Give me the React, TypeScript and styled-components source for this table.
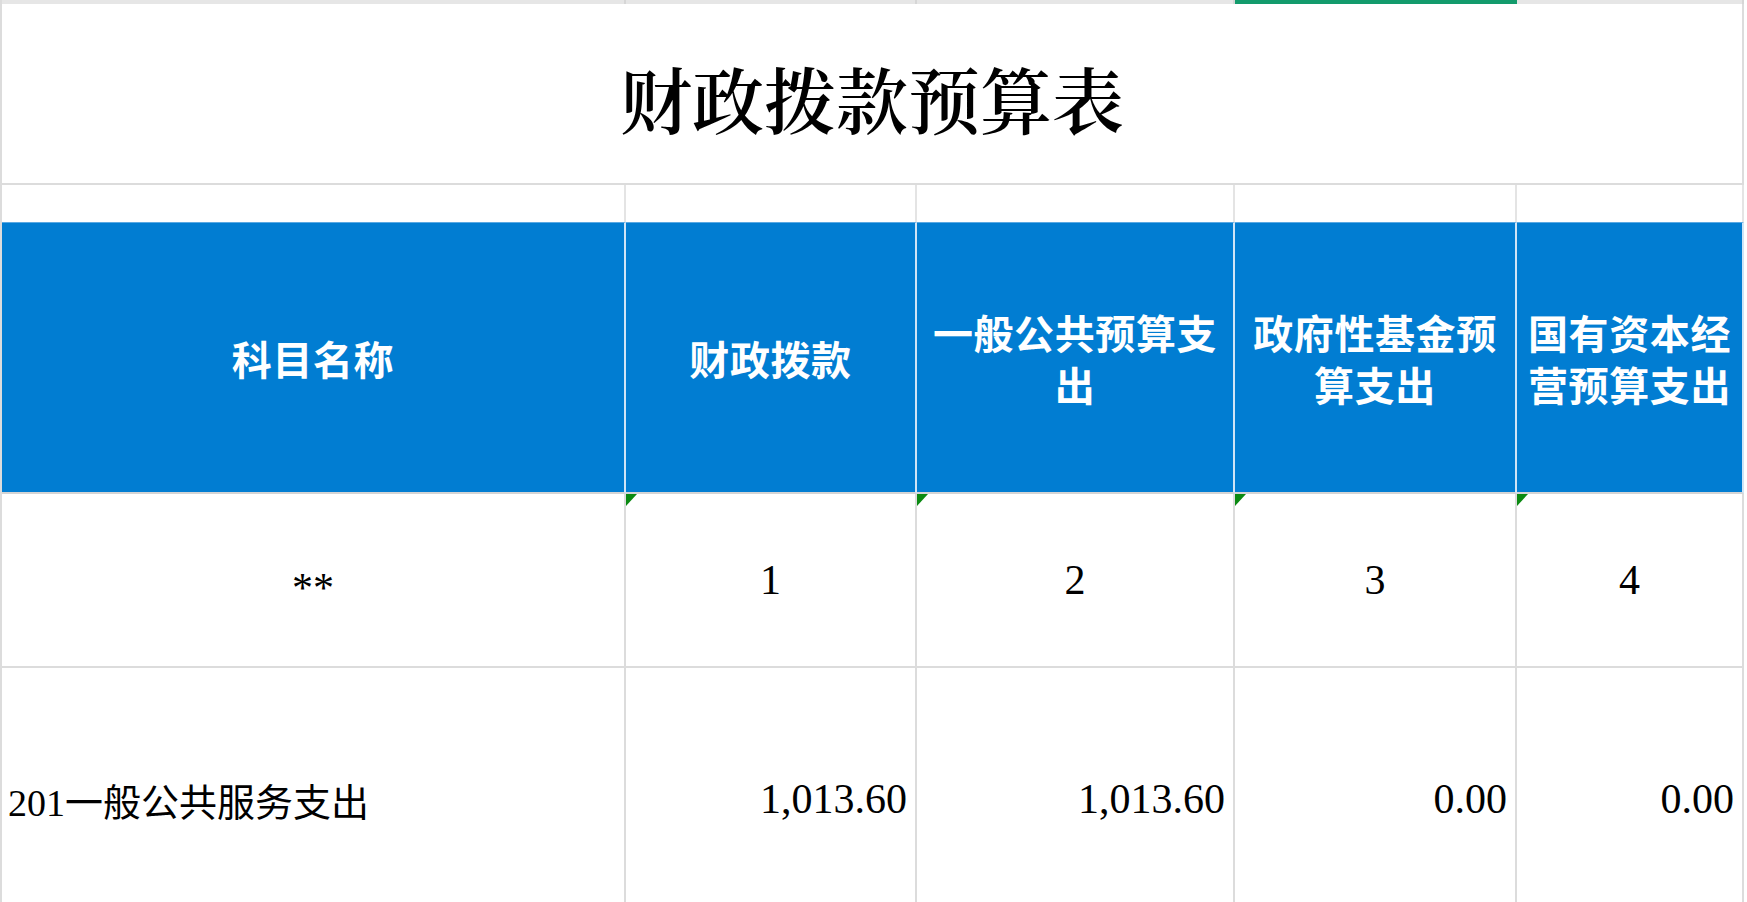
import React from "react";
import styled, { createGlobalStyle, css } from "styled-components";

const GlobalStyle = createGlobalStyle`
  html, body {
    margin: 0;
    padding: 0;
    background: #ffffff;
  }
  body {
    overflow: hidden;
  }
`;

const GRID_LINE = "#dcdcdc";
const HEADER_BLUE = "#017dd2";

const Sheet = styled.div`
  width: 1747px;
  height: 902px;
  overflow: hidden;
  background: #ffffff;
`;

const Grid = styled.div`
  display: grid;
  grid-template-columns: 624px 291px 318px 282px 227px;
  grid-template-rows: 4px 181px 37px 272px 174px 264px;
  width: max-content;
  border-left: 2px solid ${GRID_LINE};
`;

const StripCell = styled.div<{ $selected?: boolean }>`
  box-sizing: border-box;
  background: ${(p) => (p.$selected ? "#139b6c" : "#e6e6e6")};
  border-right: 2px solid ${(p) => (p.$selected ? "#139b6c" : "#d6d6d6")};
`;

const TitleCell = styled.div`
  grid-column: 1 / -1;
  box-sizing: border-box;
  display: flex;
  align-items: center;
  justify-content: center;
  border-right: 2px solid ${GRID_LINE};
  border-bottom: 2px solid ${GRID_LINE};
  padding-top: 6px;
  font-family: "Noto Serif CJK SC", "Noto Sans CJK SC", serif;
  font-size: 72px;
  font-weight: 600;
  color: #000000;
`;

const SpacerCell = styled.div`
  box-sizing: border-box;
  border-right: 2px solid #e4e4e4;
`;

const HeaderCell = styled.div`
  box-sizing: border-box;
  display: flex;
  align-items: center;
  justify-content: center;
  padding: 0 4px;
  background: ${HEADER_BLUE};
  border-top: 1px solid #5aa9e3;
  border-right: 2px solid #cfe4f6;
  border-bottom: 2px solid #d4d4d4;
  color: #ffffff;
  font-family: "Noto Sans CJK SC", sans-serif;
  font-size: 40px;
  font-weight: 700;
  line-height: 52px;
  letter-spacing: 0.6px;
  text-align: center;
`;

const BodyCell = styled.div<{ $align: "left" | "center" | "right"; $flag?: boolean }>`
  position: relative;
  box-sizing: border-box;
  display: flex;
  align-items: center;
  justify-content: ${(p) =>
    p.$align === "left" ? "flex-start" : p.$align === "right" ? "flex-end" : "center"};
  padding: ${(p) => (p.$align === "left" ? "0 0 0 6px" : p.$align === "right" ? "0 8px 0 0" : "0")};
  border-right: 2px solid ${GRID_LINE};
  border-bottom: 2px solid ${GRID_LINE};
  color: #000000;
  font-family: "Liberation Serif", "Noto Sans CJK SC", serif;
  font-size: 42px;
  white-space: nowrap;
  ${(p) =>
    p.$flag &&
    css`
      &::before {
        content: "";
        position: absolute;
        left: 0;
        top: 0;
        width: 0;
        height: 0;
        border-top: 12px solid #0b8a12;
        border-right: 11px solid transparent;
      }
    `}
`;

const Stars = styled.span`
  display: inline-block;
  transform: translateY(8px);
`;

const LabelText = styled.span`
  font-size: 38px;
  font-family: "Liberation Serif", "Noto Sans CJK SC", serif;
`;

const headers = ["科目名称", "财政拨款", "一般公共预算支出", "政府性基金预算支出", "国有资本经营预算支出"];
const indexRow = ["1", "2", "3", "4"];
const dataRow = ["1,013.60", "1,013.60", "0.00", "0.00"];

export default function App() {
  return (
    <Sheet>
      <GlobalStyle />
      <Grid>
        {[0, 1, 2, 3, 4].map((i) => (
          <StripCell key={`s${i}`} $selected={i === 3} />
        ))}
        <TitleCell>财政拨款预算表</TitleCell>
        {[0, 1, 2, 3, 4].map((i) => (
          <SpacerCell key={`e${i}`} />
        ))}
        {headers.map((h) => (
          <HeaderCell key={h}>{h}</HeaderCell>
        ))}
        <BodyCell $align="center">
          <Stars>**</Stars>
        </BodyCell>
        {indexRow.map((v) => (
          <BodyCell key={`i${v}`} $align="center" $flag>
            {v}
          </BodyCell>
        ))}
        <BodyCell $align="left">
          <LabelText>201一般公共服务支出</LabelText>
        </BodyCell>
        {dataRow.map((v, i) => (
          <BodyCell key={`d${i}`} $align="right">
            {v}
          </BodyCell>
        ))}
      </Grid>
    </Sheet>
  );
}
